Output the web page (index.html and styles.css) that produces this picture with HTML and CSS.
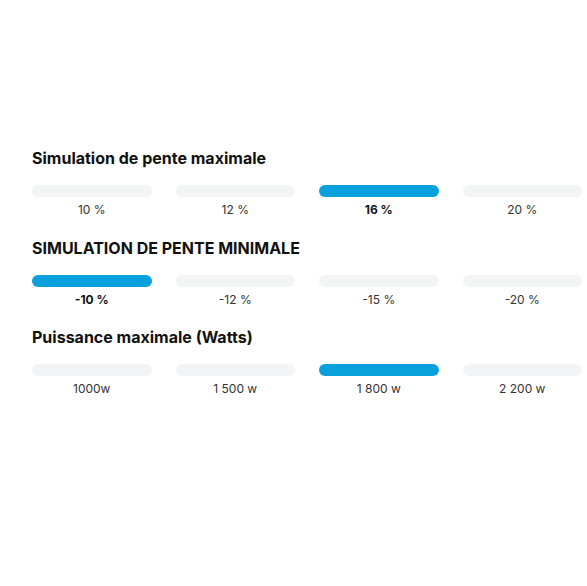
FILE: index.html
```html
<!DOCTYPE html>
<html lang="fr">
<head>
<meta charset="utf-8">
<link rel="stylesheet" href="styles.css">
</head>
<body>
<main class="settings">
  <section class="group">
    <h2 class="group-title">Simulation de pente maximale</h2>
    <div class="options">
      <div class="option"><span class="bar"></span><span class="label">10 %</span></div>
      <div class="option"><span class="bar"></span><span class="label">12 %</span></div>
      <div class="option active"><span class="bar"></span><span class="label">16 %</span></div>
      <div class="option"><span class="bar"></span><span class="label">20 %</span></div>
    </div>
  </section>
  <section class="group">
    <h2 class="group-title">SIMULATION DE PENTE MINIMALE</h2>
    <div class="options">
      <div class="option active"><span class="bar"></span><span class="label">-10 %</span></div>
      <div class="option"><span class="bar"></span><span class="label">-12 %</span></div>
      <div class="option"><span class="bar"></span><span class="label">-15 %</span></div>
      <div class="option"><span class="bar"></span><span class="label">-20 %</span></div>
    </div>
  </section>
  <section class="group">
    <h2 class="group-title">Puissance maximale (Watts)</h2>
    <div class="options">
      <div class="option"><span class="bar"></span><span class="label">1000w</span></div>
      <div class="option"><span class="bar"></span><span class="label">1 500 w</span></div>
      <div class="option active"><span class="bar"></span><span class="label">1 800 w</span></div>
      <div class="option"><span class="bar"></span><span class="label">2 200 w</span></div>
    </div>
  </section>
</main>
</body>
</html>
```

FILE: styles.css
```css
html, body {
  margin: 0;
  background: #ffffff;
}

body {
  font-family: Inter, "Noto Sans", sans-serif;
  color: #111111;
}

.settings {
  width: 550px;
  padding: 148px 0 0 32px;
  display: flex;
  flex-direction: column;
  gap: 19.5px;
}

.group-title {
  margin: 0 0 17px;
  font-size: 16px;
  font-weight: 700;
  line-height: 20px;
  color: #111111;
}

.options {
  display: grid;
  grid-template-columns: repeat(4, 1fr);
  column-gap: 24px;
}

.option {
  display: flex;
  flex-direction: column;
  align-items: center;
  gap: 5px;
}

.bar {
  display: block;
  width: 100%;
  height: 12px;
  border-radius: 6px;
  background: #f3f4f6;
}

.label {
  font-size: 12px;
  line-height: 16px;
  color: #333333;
}

.option.active .bar {
  background: #0aa0dc;
}

.option.active .label {
  font-weight: 700;
  color: #111111;
}

/* the wattage labels stay regular weight even when selected */
.group:last-child .option.active .label {
  font-weight: 400;
  color: #333333;
}
```
